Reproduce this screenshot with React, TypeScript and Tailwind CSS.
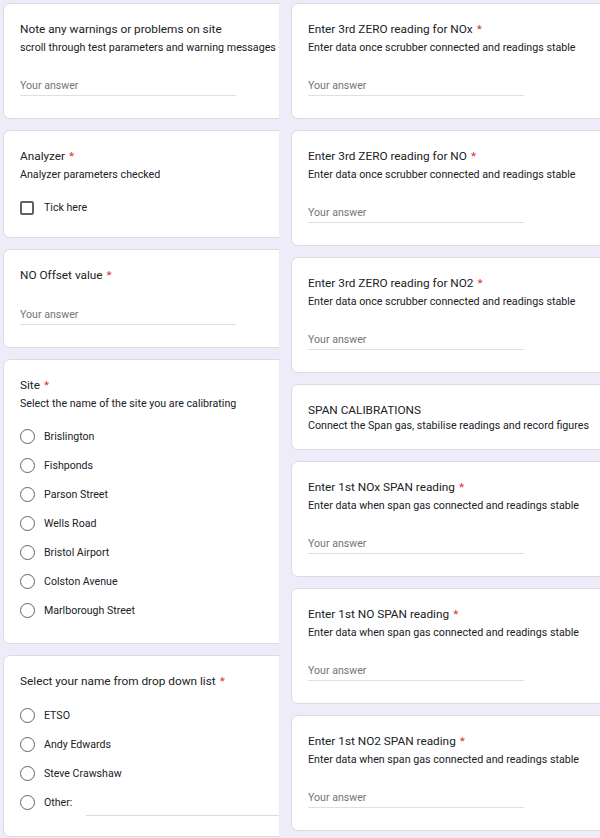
import React from 'react'

const font = { fontFamily: 'Roboto, "Liberation Sans", Arial, sans-serif' }

function Title({ text, required }: { text: string; required?: boolean }) {
  return (
    <div className="text-[11.8px] leading-[16px] text-[#202124] whitespace-nowrap">
      {text}
      {required && <span className="text-[#d93025] ml-[4px]">*</span>}
    </div>
  )
}

function Desc({ text, className = 'mt-[3px]' }: { text: string; className?: string }) {
  return <div className={`${className} text-[10.7px] leading-[16px] text-[#202124] whitespace-nowrap`}>{text}</div>
}

function Answer({ className = 'mt-[22px]' }: { className?: string }) {
  return (
    <div className={`${className} w-[216px] text-[10.6px] leading-[16px] text-[#70757a] pb-[1px] border-b border-[#e0e0e0]`}>
      Your answer
    </div>
  )
}

function Radio({ label, other }: { label: string; other?: boolean }) {
  return (
    <div className="h-[29px] flex items-center">
      <span className="w-[15px] h-[15px] rounded-full border-[1.5px] border-[#5f6368] shrink-0" />
      <span className="ml-[9px] text-[10.6px] text-[#202124] whitespace-nowrap">{label}</span>
      {other && <span className="ml-[14px] flex-1 h-[16px] border-b border-[#dadce0] mt-[10px]" />}
    </div>
  )
}

function Card({ children, wide }: { children: React.ReactNode; wide?: boolean }) {
  return (
    <div
      className={`${wide ? 'w-[330px]' : 'w-[300px]'} shrink-0 bg-white border border-[#dadce0] rounded-[7px] pt-[17px] pl-[16px] pr-[16px] pb-[22px]`}
    >
      {children}
    </div>
  )
}

const sites = ['Brislington', 'Fishponds', 'Parson Street', 'Wells Road', 'Bristol Airport', 'Colston Avenue', 'Marlborough Street']
const names = ['ETSO', 'Andy Edwards', 'Steve Crawshaw']

const zeroReadings = ['NOx', 'NO', 'NO2']
const spanReadings = ['NOx', 'NO', 'NO2']

export default function App() {
  return (
    <div style={font} className="w-[600px] h-[838px] bg-[#f0ebf8] overflow-hidden flex">
      {/* left column, cropped on the right */}
      <div className="w-[279px] shrink-0 overflow-hidden pl-[3px] pt-[3px] flex flex-col gap-[11px]">
        <Card>
          <Title text="Note any warnings or problems on site" />
          <Desc text="scroll through test parameters and warning messages - check for any problems" />
          <Answer />
        </Card>

        <div className="w-[300px] shrink-0 bg-white border border-[#dadce0] rounded-[7px] pt-[17px] pl-[16px] pb-[21px]">
          <Title text="Analyzer" required />
          <Desc text="Analyzer parameters checked" />
          <div className="mt-[17px] h-[16px] flex items-center">
            <span className="w-[14px] h-[14px] rounded-[2px] border-2 border-[#5f6368] shrink-0" />
            <span className="ml-[10px] text-[10.6px] text-[#202124]">Tick here</span>
          </div>
        </div>

        <Card>
          <Title text="NO Offset value" required />
          <Answer className="mt-[24px]" />
        </Card>

        <div className="w-[300px] shrink-0 bg-white border border-[#dadce0] rounded-[7px] pt-[17px] pl-[16px] pb-[18px]">
          <Title text="Site" required />
          <Desc text="Select the name of the site you are calibrating" />
          <div className="mt-[10px]">
            {sites.map((s) => (
              <Radio key={s} label={s} />
            ))}
          </div>
        </div>

        <div className="w-[300px] shrink-0 bg-white border border-[#dadce0] rounded-[7px] pt-[17px] pl-[16px] pb-[19px]">
          <Title text="Select your name from drop down list" required />
          <div className="mt-[12px]">
            {names.map((n) => (
              <Radio key={n} label={n} />
            ))}
            <Radio label="Other:" other />
          </div>
        </div>
      </div>

      {/* right column, cropped on the right */}
      <div className="flex-1 overflow-hidden pl-[12px] pt-[3px] flex flex-col gap-[11px]">
        {zeroReadings.map((g) => (
          <Card key={'z' + g} wide>
            <Title text={`Enter 3rd ZERO reading for ${g}`} required />
            <Desc text="Enter data once scrubber connected and readings stable" />
            <Answer />
          </Card>
        ))}

        <div className="w-[330px] shrink-0 bg-white border border-[#dadce0] rounded-[7px] pt-[17px] pl-[16px] pb-[15px]">
          <Title text="SPAN CALIBRATIONS" />
          <Desc text="Connect the Span gas, stabilise readings and record figures" className="mt-0" />
        </div>

        {spanReadings.map((g) => (
          <Card key={'s' + g} wide>
            <Title text={`Enter 1st ${g} SPAN reading`} required />
            <Desc text="Enter data when span gas connected and readings stable" />
            <Answer />
          </Card>
        ))}
      </div>
    </div>
  )
}
